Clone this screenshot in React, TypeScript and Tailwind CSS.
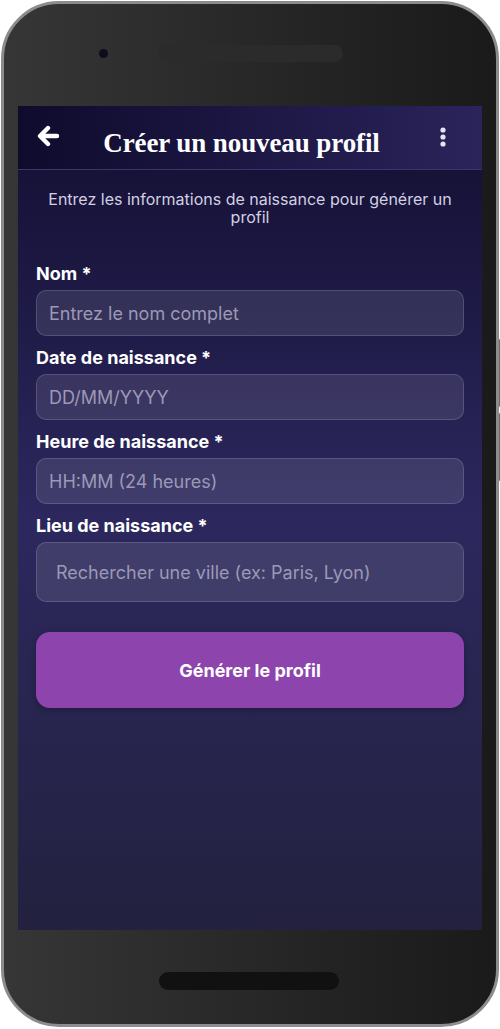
import React from 'react';

const fields = [
  { label: 'Nom *', placeholder: 'Entrez le nom complet' },
  { label: 'Date de naissance *', placeholder: 'DD/MM/YYYY' },
  { label: 'Heure de naissance *', placeholder: 'HH:MM (24 heures)' },
];

const App: React.FC = () => {
  return (
    <div className="w-[500px] h-[1029px] bg-white relative overflow-hidden" style={{ fontFamily: 'Inter, "Noto Sans", sans-serif' }}>
      {/* side buttons */}
      <div className="absolute right-[0px] top-[338px] w-[3px] h-[70px] bg-[#6a6a6a] rounded-r" />
      <div className="absolute right-[0px] top-[412px] w-[3px] h-[70px] bg-[#6a6a6a] rounded-r" />

      <div className="absolute left-[1px] top-[1px] w-[498px] h-[1026px] rounded-[58px] border-[3px] border-[#8c8c8c] bg-gradient-to-r from-[#363636] to-[#1a1a1a] flex flex-col">
        {/* top bezel */}
        <div className="h-[102px] relative shrink-0">
          <div className="absolute left-[95px] top-[45px] w-[9px] h-[9px] rounded-full bg-[#0e0c1f]" />
          <div className="absolute left-[155px] top-[41px] w-[184px] h-[17px] rounded-full bg-[#2b2b2b]" />
        </div>

        {/* screen */}
        <div className="mx-[14px] h-[824px] flex flex-col bg-gradient-to-b from-[#120e31] via-[#2c285e] to-[#23213f] overflow-hidden">
          <div className="h-[64px] shrink-0 flex items-center px-[19px] bg-gradient-to-r from-[#0f0b2d] to-[#2a245b] border-b border-[#3b3668]">
            <svg width="23" height="22" viewBox="0 0 23 22" className="-mt-[3px] shrink-0">
              <path d="M11 3 L3 11 L11 19 M4 11 H20" fill="none" stroke="#fff" strokeWidth="4.4" strokeLinecap="round" strokeLinejoin="round" />
            </svg>
            <h1 className="flex-1 text-center text-white text-[27px] font-bold leading-none mt-[12px] pr-[16px]" style={{ fontFamily: '"Liberation Serif", "DejaVu Serif", serif', letterSpacing: '-0.1px' }}>
              Créer un nouveau profil
            </h1>
            <svg width="8" height="22" viewBox="0 0 8 22" className="-mt-[2px] mr-[16px] shrink-0">
              <circle cx="4" cy="4" r="2.6" fill="#e6e4ef" />
              <circle cx="4" cy="11" r="2.6" fill="#e6e4ef" />
              <circle cx="4" cy="18" r="2.6" fill="#e6e4ef" />
            </svg>
          </div>

          <div className="px-[18px] pt-[20px] flex flex-col">
            <p className="text-center text-[16px] leading-[18px] text-[#d3d0e2] px-[10px]">
              Entrez les informations de naissance pour générer un profil
            </p>

            <div className="mt-[38px] flex flex-col">
              {fields.map((f) => (
                <div key={f.label} className="flex flex-col mb-[12px]">
                  <label className="text-white text-[18px] font-bold leading-[20px] mb-[6px]">{f.label}</label>
                  <div className="h-[46px] rounded-[10px] bg-white/10 border border-white/15 flex items-center px-[12px]">
                    <span className="text-[18px] text-[#9c98b6]">{f.placeholder}</span>
                  </div>
                </div>
              ))}
              <div className="flex flex-col">
                <label className="text-white text-[18px] font-bold leading-[20px] mb-[6px]">Lieu de naissance *</label>
                <div className="h-[60px] rounded-[10px] bg-white/10 border border-white/15 flex items-center px-[19px]">
                  <span className="text-[18px] text-[#9c98b6]">Rechercher une ville (ex: Paris, Lyon)</span>
                </div>
              </div>

              <button className="mt-[30px] h-[76px] rounded-[14px] bg-[#8e44ad] text-white text-[18px] font-bold shadow-[0_2px_6px_rgba(0,0,0,0.25)]">
                Générer le profil
              </button>
            </div>
          </div>
        </div>

        {/* bottom bezel */}
        <div className="flex-1 relative">
          <div className="absolute left-[155px] top-[42px] w-[180px] h-[18px] rounded-full bg-[#111111]" />
        </div>
      </div>
    </div>
  );
};

export default App;
